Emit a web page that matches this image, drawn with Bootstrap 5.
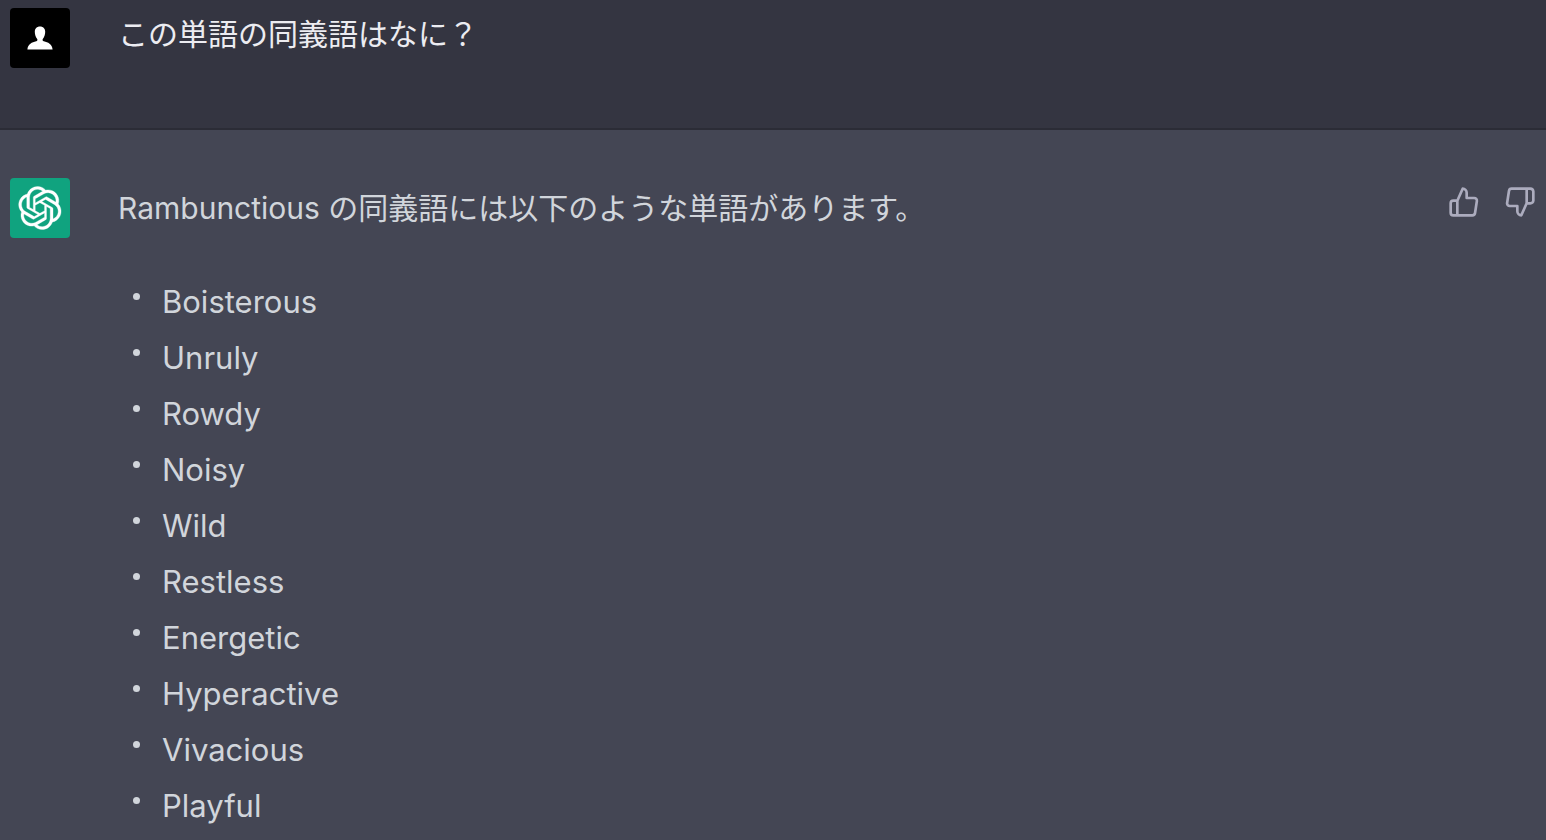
<!DOCTYPE html>
<html lang="ja">
<head>
<meta charset="utf-8">
<meta name="viewport" content="width=device-width, initial-scale=1">
<title>Chat</title>
<link href="https://cdn.jsdelivr.net/npm/bootstrap@5.3.0/dist/css/bootstrap.min.css" rel="stylesheet">
<style>
body{background:#444654;color:#d1d5db;font-family:Inter,"Noto Sans CJK JP",sans-serif}
.turn{gap:48px;padding:0 10px}
.turn-user{background:#343541;color:#ececf1;border-bottom:2px solid #2b2c36;padding-top:8px;padding-bottom:60px}
.turn-bot{padding-top:48px}
.avatar{width:60px;height:60px;border-radius:4px}
.avatar-user{background:#000}
.avatar-bot{background:#10a37f}
.message{font-size:30px;line-height:52px}
.turn-bot .message{line-height:60px}
.synonyms{font-size:31px;line-height:56px;margin-top:36px}
.synonyms li{gap:22px;padding-left:15px}
.synonyms li::before{content:"";width:7px;height:7px;margin-top:19px;border-radius:50%;background:#d1d5db}
.rates{gap:24px}
.rate{color:#acacbe;line-height:1}
.rate svg{display:block}
</style>
</head>
<body>
<main>
<article class="turn turn-user d-flex align-items-start">
<div class="avatar avatar-user flex-shrink-0 d-flex align-items-center justify-content-center">
<svg width="26" height="24" viewBox="0 0 26 24" fill="#fff" aria-hidden="true"><path d="M13 0.500C9.800 0.500 7.800 2.600 7.800 5.800c0 3 .9 5.200 2.400 7.200.6 1 .2 1.900-1 2.300C5 16.500.9 17.800.4 23.500h25.200c-.5-5.700-4.600-7-8.800-8.200-1.200-.4-1.600-1.300-1-2.300 1.500-2 2.400-4.200 2.400-7.200 0-3.200-2-5.300-5.200-5.300z"/></svg>
</div>
<p class="message mb-0">この単語の同義語はなに？</p>
</article>
<article class="turn turn-bot d-flex align-items-start">
<div class="avatar avatar-bot flex-shrink-0 d-flex align-items-center justify-content-center">
<svg width="44" height="44" viewBox="0 0 41 41" fill="#fff" stroke="#fff" stroke-width="0.3" aria-hidden="true"><path d="M37.532 16.8707C37.9808 15.5241 38.1363 14.0974 37.9886 12.6859C37.8409 11.2744 37.3934 9.91076 36.676 8.68622C35.6126 6.83404 33.9882 5.3676 32.0373 4.4985C30.0864 3.62941 27.9098 3.40259 25.8215 3.85078C24.8796 2.7893 23.7219 1.94125 22.4257 1.36341C21.1295 0.785575 19.7249 0.491269 18.3058 0.500197C16.1708 0.495044 14.0893 1.16803 12.3614 2.42214C10.6335 3.67624 9.34853 5.44666 8.6917 7.47815C7.30085 7.76286 5.98686 8.3414 4.8377 9.17505C3.68854 10.0087 2.73073 11.0782 2.02839 12.312C0.956464 14.1591 0.498905 16.2988 0.721698 18.4228C0.944492 20.5467 1.83612 22.5449 3.268 24.1293C2.81966 25.4759 2.66413 26.9026 2.81182 28.3141C2.95951 29.7256 3.40701 31.0892 4.12437 32.3138C5.18791 34.1659 6.8123 35.6322 8.76321 36.5013C10.7141 37.3704 12.8907 37.5973 14.9789 37.1492C15.9208 38.2107 17.0786 39.0587 18.3747 39.6366C19.6709 40.2144 21.0755 40.5087 22.4946 40.4998C24.6307 40.5054 26.7133 39.8321 28.4418 38.5772C30.1704 37.3223 31.4556 35.5506 32.1119 33.5179C33.5027 33.2332 34.8167 32.6547 35.9659 31.821C37.115 30.9874 38.0728 29.9178 38.7752 28.684C39.8458 26.8371 40.3023 24.6979 40.0789 22.5748C39.8556 20.4517 38.9639 18.4544 37.532 16.8707ZM22.4978 37.8849C20.7443 37.8874 19.0459 37.2733 17.6994 36.1501C17.7601 36.117 17.8666 36.0586 17.936 36.0161L25.9004 31.4156C26.1003 31.3019 26.2663 31.137 26.3813 30.9378C26.4964 30.7386 26.5563 30.5124 26.5549 30.2825V19.0542L29.9213 20.998C29.9389 21.0068 29.9541 21.0198 29.9656 21.0359C29.977 21.052 29.9842 21.0707 29.9867 21.0902V30.3889C29.9842 32.375 29.1946 34.2791 27.7909 35.6841C26.3872 37.0892 24.4838 37.8806 22.4978 37.8849ZM6.39227 31.0064C5.51397 29.4888 5.19742 27.7107 5.49804 25.9832C5.55718 26.0187 5.66048 26.0818 5.73461 26.1244L13.699 30.7248C13.8975 30.8408 14.1233 30.902 14.3532 30.902C14.583 30.902 14.8088 30.8408 15.0073 30.7248L24.731 25.1103V28.9979C24.7321 29.0177 24.7283 29.0376 24.7199 29.0556C24.7115 29.0736 24.6988 29.0893 24.6829 29.1012L16.6317 33.7497C14.9096 34.7416 12.8643 35.0097 10.9447 34.4954C9.02506 33.9811 7.38785 32.7263 6.39227 31.0064ZM4.29707 13.6194C5.17156 12.0998 6.55279 10.9364 8.19885 10.3327C8.19885 10.4013 8.19491 10.5228 8.19491 10.6071V19.808C8.19351 20.0378 8.25334 20.2638 8.36823 20.4629C8.48312 20.6619 8.64893 20.8267 8.84863 20.9404L18.5723 26.5542L15.206 28.4979C15.1894 28.5089 15.1703 28.5155 15.1505 28.5173C15.1307 28.5191 15.1107 28.516 15.0924 28.5082L7.04046 23.8557C5.32135 22.8601 4.06716 21.2235 3.55289 19.3046C3.03862 17.3858 3.30624 15.3413 4.29707 13.6194ZM31.955 20.0556L22.2312 14.4411L25.5976 12.4981C25.6142 12.4872 25.6333 12.4805 25.6531 12.4787C25.6729 12.4769 25.6928 12.4801 25.7111 12.4879L33.7631 17.1364C34.9967 17.849 36.0017 18.8982 36.6606 20.1613C37.3194 21.4244 37.6047 22.849 37.4832 24.2684C37.3617 25.6878 36.8382 27.0432 35.9743 28.1759C35.1103 29.3086 33.9415 30.1717 32.6047 30.6641C32.6047 30.5947 32.6047 30.4733 32.6047 30.3889V21.188C32.6066 20.9586 32.5474 20.7328 32.4332 20.5338C32.319 20.3348 32.154 20.1698 31.955 20.0556ZM35.3055 15.0128C35.2464 14.9765 35.1431 14.9142 35.069 14.8717L27.1045 10.2712C26.906 10.1554 26.6803 10.0943 26.4504 10.0943C26.2206 10.0943 25.9948 10.1554 25.7963 10.2712L16.0726 15.8858V11.9982C16.0715 11.9783 16.0753 11.9585 16.0837 11.9405C16.0921 11.9225 16.1048 11.9068 16.1207 11.8949L24.1719 7.25025C25.4053 6.53903 26.8158 6.19376 28.2383 6.25482C29.6608 6.31589 31.0364 6.78077 32.2044 7.59508C33.3723 8.40939 34.2842 9.53945 34.8334 10.8531C35.3826 12.1667 35.5464 13.6095 35.3055 15.0128ZM14.2424 21.9419L10.8752 19.9981C10.8576 19.9893 10.8423 19.9763 10.8309 19.9602C10.8195 19.9441 10.8122 19.9254 10.8098 19.9058V10.6071C10.8107 9.18295 11.2173 7.78848 11.9819 6.58696C12.7466 5.38544 13.8377 4.42659 15.1275 3.82264C16.4173 3.21869 17.8524 2.99464 19.2649 3.1767C20.6775 3.35876 22.0089 3.93941 23.1034 4.85067C23.0427 4.88379 22.937 4.94215 22.8668 4.98473L14.9024 9.58517C14.7025 9.69878 14.5366 9.86356 14.4215 10.0626C14.3065 10.2616 14.2466 10.4877 14.2479 10.7175L14.2424 21.9419ZM16.071 17.9991L20.4018 15.4978L24.7325 17.9975V22.9985L20.4018 25.4983L16.071 22.9985V17.9991Z"/></svg>
</div>
<div class="flex-grow-1">
<p class="message mb-0">Rambunctious の同義語には以下のような単語があります。</p>
<ul class="synonyms list-unstyled mb-0">
<li class="d-flex">Boisterous</li>
<li class="d-flex">Unruly</li>
<li class="d-flex">Rowdy</li>
<li class="d-flex">Noisy</li>
<li class="d-flex">Wild</li>
<li class="d-flex">Restless</li>
<li class="d-flex">Energetic</li>
<li class="d-flex">Hyperactive</li>
<li class="d-flex">Vivacious</li>
<li class="d-flex">Playful</li>
</ul>
</div>
<div class="rates d-flex flex-shrink-0 mt-2">
<button type="button" class="rate btn border-0 p-0" aria-label="良い回答">
<svg width="32" height="32" viewBox="0 0 24 24" fill="none" stroke="currentColor" stroke-width="2" stroke-linecap="round" stroke-linejoin="round" aria-hidden="true"><path d="M14 9V5a3 3 0 0 0-3-3l-4 9v11h11.280a2 2 0 0 0 2-1.700l1.380-9a2 2 0 0 0-2-2.300zM7 22H4a2 2 0 0 1-2-2v-7a2 2 0 0 1 2-2h3"/></svg>
</button>
<button type="button" class="rate btn border-0 p-0" aria-label="良くない回答">
<svg width="32" height="32" viewBox="0 0 24 24" fill="none" stroke="currentColor" stroke-width="2" stroke-linecap="round" stroke-linejoin="round" aria-hidden="true"><path d="M10 15v4a3 3 0 0 0 3 3l4-9V2H5.720a2 2 0 0 0-2 1.700l-1.380 9a2 2 0 0 0 2 2.300zm7-13h2.670A2.310 2.310 0 0 1 22 4v7a2.310 2.310 0 0 1-2.330 2H17"/></svg>
</button>
</div>
</article>
</main>
<script src="https://cdn.jsdelivr.net/npm/bootstrap@5.3.0/dist/js/bootstrap.bundle.min.js"></script>
</body>
</html>
